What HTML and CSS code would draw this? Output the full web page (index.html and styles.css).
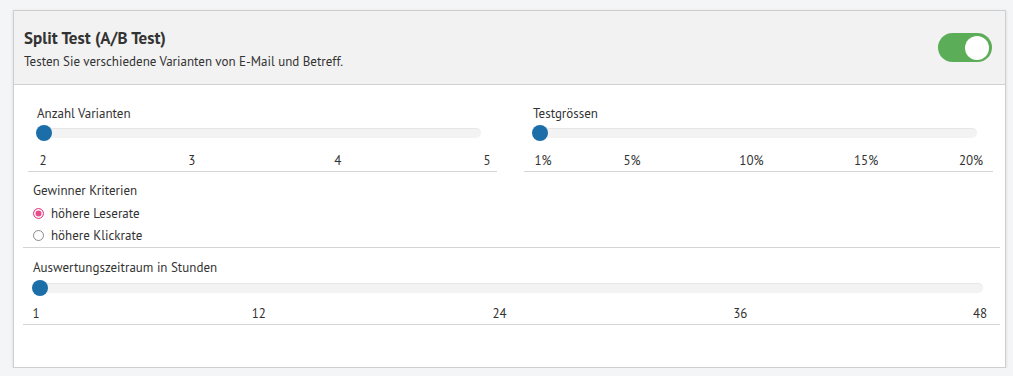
FILE: index.html
```html
<!DOCTYPE html>
<html lang="de">
<head>
<meta charset="utf-8">
<title>Split Test</title>
<link rel="stylesheet" href="styles.css">
</head>
<body>
<div class="card">
  <div class="card-head">
    <div class="head-text">
      <h2 class="title">Split Test (A/B Test)</h2>
      <p class="subtitle">Testen Sie verschiedene Varianten von E-Mail und Betreff.</p>
    </div>
    <div class="toggle"><span class="knob"></span></div>
  </div>
  <div class="card-body">
    <div class="cols">
      <div class="slider-group col-left">
        <div class="label">Anzahl Varianten</div>
        <div class="track"><span class="thumb"></span></div>
        <div class="scale">
          <span class="tick" style="left:0%">2</span>
          <span class="tick" style="left:33.5%">3</span>
          <span class="tick" style="left:66.4%">4</span>
          <span class="tick" style="left:100%">5</span>
        </div>
      </div>
      <div class="slider-group col-right">
        <div class="label">Testgrössen</div>
        <div class="track"><span class="thumb"></span></div>
        <div class="scale">
          <span class="tick" style="left:0%">1%</span>
          <span class="tick" style="left:20.8%">5%</span>
          <span class="tick" style="left:48.7%">10%</span>
          <span class="tick" style="left:75.5%">15%</span>
          <span class="tick" style="left:100%">20%</span>
        </div>
      </div>
    </div>
    <div class="criteria">
      <div class="label">Gewinner Kriterien</div>
      <label class="radio-row"><span class="radio checked"></span>höhere Leserate</label>
      <label class="radio-row"><span class="radio"></span>höhere Klickrate</label>
    </div>
    <div class="slider-group wide">
      <div class="label">Auswertungszeitraum in Stunden</div>
      <div class="track"><span class="thumb"></span></div>
      <div class="scale">
        <span class="tick" style="left:0%">1</span>
        <span class="tick" style="left:23.6%">12</span>
        <span class="tick" style="left:49.1%">24</span>
        <span class="tick" style="left:74.6%">36</span>
        <span class="tick" style="left:100%">48</span>
      </div>
    </div>
  </div>
</div>
</body>
</html>
```
FILE: styles.css
```css
* { box-sizing: border-box; }
html, body { margin: 0; padding: 0; }
body {
  background: #f4f5f7;
  font-family: "PT Sans", Lato, "Liberation Sans", sans-serif;
  color: #333;
  font-size: 13px;
  padding: 10px 7px 0 13px;
}
.card {
  background: #fff;
  border: 1px solid #cfcfcf;
  box-shadow: 0 1px 3px rgba(0,0,0,0.12);
  height: 358px;
}
.card-head {
  background: #f2f2f2;
  border-bottom: 1px solid #d2d2d2;
  height: 74px;
  display: flex;
  align-items: center;
  justify-content: space-between;
  padding: 0 13px 0 10px;
}
.head-text { padding-top: 2px; }
.title {
  margin: 0;
  font-size: 17px;
  font-weight: 700;
  line-height: 20px;
  color: #333;
}
.subtitle {
  margin: 5px 0 0;
  font-size: 13px;
  line-height: 17px;
}
.toggle {
  width: 54px;
  height: 29px;
  border-radius: 15px;
  background: #5cad57;
  display: flex;
  align-items: center;
  justify-content: flex-end;
  padding-right: 3px;
}
.knob {
  width: 24px;
  height: 24px;
  border-radius: 50%;
  background: #fff;
}
.card-body { padding: 0 5px 0 9px; }
.cols {
  display: flex;
  gap: 27px;
  padding: 0 7px 0 5px;
}
.slider-group {
  flex: 1;
  border-bottom: 1px solid #d4d4d4;
  padding-top: 20px;
}
.label {
  line-height: 18px;
  font-size: 13px;
}
.col-left .label, .col-left .track { margin-left: 9px; }
.col-left .track { margin-right: 16px; }
.col-right .label, .col-right .track { margin-left: 9px; }
.col-right .track { margin-right: 16px; }
.track {
  position: relative;
  margin-top: 5px;
  height: 10px;
  border-radius: 5px;
  background: #f3f3f3;
  border-top: 1px solid #e6e6e6;
}
.thumb {
  position: absolute;
  left: -1px;
  top: -4px;
  width: 16px;
  height: 16px;
  border-radius: 50%;
  background: #1b6ea8;
}
.scale {
  position: relative;
  height: 33px;
}
.col-left .scale { margin: 0 10px 0 15px; }
.col-right .scale { margin: 0 22px 0 19px; }
.tick {
  position: absolute;
  top: 14px;
  line-height: 18px;
  transform: translateX(-50%);
  font-size: 13px;
}
.criteria {
  border-bottom: 1px solid #d4d4d4;
  padding: 10px 0 1px 10px;
}
.criteria .label { margin-bottom: 2px; }
.radio-row {
  display: flex;
  align-items: center;
  height: 22px;
  font-size: 13px;
}
.radio {
  width: 11px;
  height: 11px;
  border-radius: 50%;
  border: 1px solid #8a8a8a;
  margin-right: 7px;
  background: #fff;
}
.radio.checked {
  border: 1px solid #e84a8c;
  background: #e84a8c;
  box-shadow: inset 0 0 0 1.5px #fff;
}
.wide { padding-top: 11px; }
.wide .label, .wide .track { margin-left: 10px; }
.wide .track { margin-right: 17px; margin-top: 6px; }
.wide .scale { margin: 0 20px 0 13px; height: 31px; }
.wide .tick { top: 12px; }
```
